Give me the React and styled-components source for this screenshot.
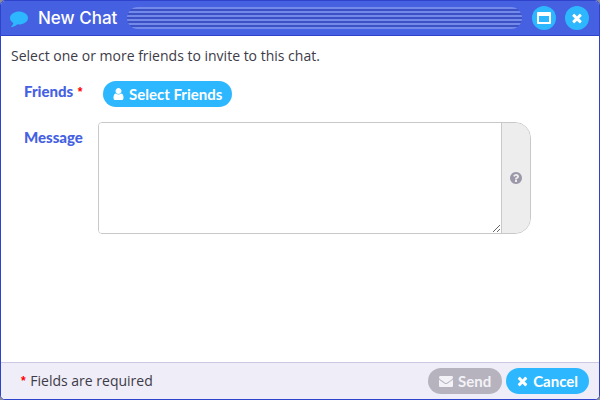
import React from "react";
import styled, { createGlobalStyle } from "styled-components";

const GlobalStyle = createGlobalStyle`
  *, *::before, *::after { box-sizing: border-box; }
  body {
    margin: 0;
    background: #8c8c94;
    color: #3d3b48;
    font: 14px/20px "Open Sans", "Liberation Sans", sans-serif;
  }
  button, textarea { font: inherit; }
`;

const Dialog = styled.form`
  display: flex;
  flex-direction: column;
  min-height: 100vh;
  border: 1px solid #2f42cb;
  border-radius: 5px;
  background: #fff;
  overflow: hidden;
`;

const Header = styled.header`
  display: flex;
  align-items: center;
  gap: 10px;
  height: 35px;
  padding: 0 10px 0 9px;
  background: #4561e2;
  border-bottom: 1px solid #2f42cb;
`;

const Title = styled.h1`
  margin: 0;
  color: #fff;
  font: 500 17px/24px Inter, sans-serif;
  white-space: nowrap;
`;

const Grip = styled.div`
  flex: 1;
  height: 22px;
  border-radius: 11px;
  background: repeating-linear-gradient(#748aeb 0 2px, #3c51c4 2px 4px);
`;

const WindowControls = styled.div`
  display: flex;
  gap: 9px;
`;

const RoundButton = styled.button`
  display: grid;
  place-items: center;
  width: 24px;
  height: 24px;
  padding: 0;
  border: 0;
  border-radius: 50%;
  background: #2db7ff;
  color: #fff;
`;

const Icon = styled.svg`
  flex: none;
  width: ${(p) => p.$width || p.$size}px;
  height: ${(p) => p.$size}px;
  fill: currentColor;
  color: ${(p) => p.$color || "inherit"};
`;

const Content = styled.main`
  flex: 1;
  padding: 10px;
`;

const Intro = styled.p`
  margin: 0 0 15px;
`;

const Field = styled.div`
  display: grid;
  grid-template-columns: 74px minmax(0, 433px);
  align-items: start;
  margin: 0 0 15px 13px;
`;

const Label = styled.label`
  padding-top: ${(p) => p.$top}px;
  color: #4561e2;
  font: 900 15px/20px Lato, sans-serif;
`;

const Required = styled.span`
  margin: 0 1px;
  color: #f00;
  font: 700 12px/12px "Liberation Sans", sans-serif;
  vertical-align: 1px;
`;

const PillButton = styled.button`
  display: inline-flex;
  align-items: center;
  justify-self: start;
  gap: 5px;
  height: 26px;
  margin-left: ${(p) => p.$indent || 0}px;
  padding: 0 ${(p) => p.$pad || 11}px;
  border: 0;
  border-radius: 13px;
  background: ${(p) => (p.disabled ? "#b6b3bf" : "#2db7ff")};
  color: ${(p) => (p.disabled ? "#f3f2f6" : "#fff")};
  font: 700 15px/20px Lato, sans-serif;
  white-space: nowrap;
`;

const MessageGroup = styled.div`
  display: flex;
  height: 112px;
  border: 1px solid #c8c8c8;
  border-radius: 4px 16px 16px 4px;
  overflow: hidden;
`;

const MessageBox = styled.textarea`
  flex: 1;
  min-width: 0;
  padding: 6px 10px;
  border: 0;
  outline: 0;
  background: #fff;
  resize: vertical;
`;

const HelpButton = styled.button`
  display: grid;
  place-items: center;
  width: 29px;
  padding: 0;
  border: 0;
  border-left: 1px solid #c8c8c8;
  background: #ededed;
  color: #9c98aa;
`;

const Footer = styled.footer`
  display: flex;
  align-items: center;
  gap: 4px;
  height: 37px;
  padding: 0 10px 0 19px;
  border-top: 1px solid #cbc8e3;
  background: #efedf7;
`;

const Note = styled.p`
  flex: 1;
  margin: 0;
`;

const paths = {
  comment:
    "M1792 896q0 174-120 321.5t-326 233-450 85.5q-70 0-145-8-198 175-460 242-49 14-114 22h-5q-15 0-27-10.5t-16-27.5v-1q-3-4-.5-12t2-10 4.5-9.5l6-9 7-8.5 8-9q7-8 31-34.5t34.5-38 31-39.5 32.5-51 27-59 26-76q-157-89-247.5-220t-90.5-281q0-174 120-321.5t326-233 450-85.5 450 85.5 326 233 120 321.5z",
  times:
    "M1490 1322q0 40-28 68l-136 136q-28 28-68 28t-68-28l-294-294-294 294q-28 28-68 28t-68-28l-136-136q-28-28-28-68t28-68l294-294-294-294q-28-28-28-68t28-68l136-136q28-28 68-28t68 28l294 294 294-294q28-28 68-28t68 28l136 136q28 28 28 68t-28 68l-294 294 294 294q28 28 28 68z",
  user:
    "M1536 1399q0 109-62.5 187t-150.5 78h-854q-88 0-150.5-78t-62.5-187q0-85 8.5-160.5t31.5-152 58.5-131 94-89 134.5-34.5q131 128 313 128t313-128q76 0 134.5 34.5t94 89 58.5 131 31.5 152 8.5 160.5zm-256-887q0 159-112.5 271.5t-271.5 112.5-271.5-112.5-112.5-271.5 112.5-271.5 271.5-112.5 271.5 112.5 112.5 271.5z",
  envelope:
    "M1792 710v794q0 66-47 113t-113 47h-1472q-66 0-113-47t-47-113v-794q44 49 101 87 362 246 497 345 57 42 92.5 65.5t94.5 48 110 24.5h2q51 0 110-24.5t94.5-48 92.5-65.5q170-123 498-345 57-39 100-87zm0-294q0 79-49 151t-122 123q-376 261-468 325-10 7-42.5 31t-54 38.5-52 32.5-57.5 27-50 9h-2q-23 0-50-9t-57.5-27-52-32.5-54-38.5-42.5-31q-91-64-262-182.5t-205-142.5q-62-42-117-115.5t-55-136.5q0-78 41.5-130t118.5-52h1472q65 0 112.5 47t47.5 113z",
  question:
    "M1024 1376v-192q0-14-9-23t-23-9h-192q-14 0-23 9t-9 23v192q0 14 9 23t23 9h192q14 0 23-9t9-23zm256-672q0-88-55.5-163t-138.5-116-170-41q-243 0-371 213-15 24 8 42l132 100q7 6 19 6 16 0 25-12 53-68 86-92 34-24 86-24 48 0 85.5 26t37.5 59q0 38-20 61t-68 45q-63 28-115.5 86.5t-52.5 125.5v36q0 14 9 23t23 9h192q14 0 23-9t9-23q0-19 21.5-49.5t54.5-49.5q32-18 49-28.5t46-35 44.5-48 28-60.5 12.5-81zm384 192q0 209-103 385.5t-279.5 279.5-385.5 103-385.5-103-279.5-279.5-103-385.5 103-385.5 279.5-279.5 385.5-103 385.5 103 279.5 279.5 103 385.5z",
};

function Glyph({ name, size, color, narrow }) {
  return (
    <Icon
      viewBox={narrow ? "192 0 1408 1792" : "0 0 1792 1792"}
      $size={size}
      $width={narrow ? 11 : size}
      $color={color}
      aria-hidden="true"
    >
      <path d={paths[name]} />
    </Icon>
  );
}

export default function App() {
  return (
    <>
      <GlobalStyle />
      <Dialog onSubmit={(e) => e.preventDefault()}>
        <Header>
          <Glyph name="comment" size={18} color="#2db7ff" />
          <Title>New Chat</Title>
          <Grip />
          <WindowControls>
            <RoundButton type="button" aria-label="Maximize">
              <Icon viewBox="0 0 14 14" $size={14} aria-hidden="true">
                <path fillRule="evenodd" d="M1 1h12a1 1 0 0 1 1 1v10a1 1 0 0 1-1 1H1a1 1 0 0 1-1-1V2a1 1 0 0 1 1-1zm1 4v6h10V5z" />
              </Icon>
            </RoundButton>
            <RoundButton type="button" aria-label="Close">
              <Glyph name="times" size={14} />
            </RoundButton>
          </WindowControls>
        </Header>
        <Content>
          <Intro>Select one or more friends to invite to this chat.</Intro>
          <Field>
            <Label htmlFor="friends" $top={0}>
              Friends <Required>*</Required>
            </Label>
            <PillButton id="friends" type="button" $indent={5} $pad={10}>
              <Glyph name="user" size={14} narrow />
              Select Friends
            </PillButton>
          </Field>
          <Field>
            <Label htmlFor="message" $top={5}>Message</Label>
            <MessageGroup>
              <MessageBox id="message" />
              <HelpButton type="button" aria-label="Help">
                <Glyph name="question" size={14} />
              </HelpButton>
            </MessageGroup>
          </Field>
        </Content>
        <Footer>
          <Note>
            <Required>*</Required> Fields are required
          </Note>
          <PillButton type="submit" disabled>
            <Glyph name="envelope" size={14} />
            Send
          </PillButton>
          <PillButton type="button">
            <Glyph name="times" size={14} narrow />
            Cancel
          </PillButton>
        </Footer>
      </Dialog>
    </>
  );
}
